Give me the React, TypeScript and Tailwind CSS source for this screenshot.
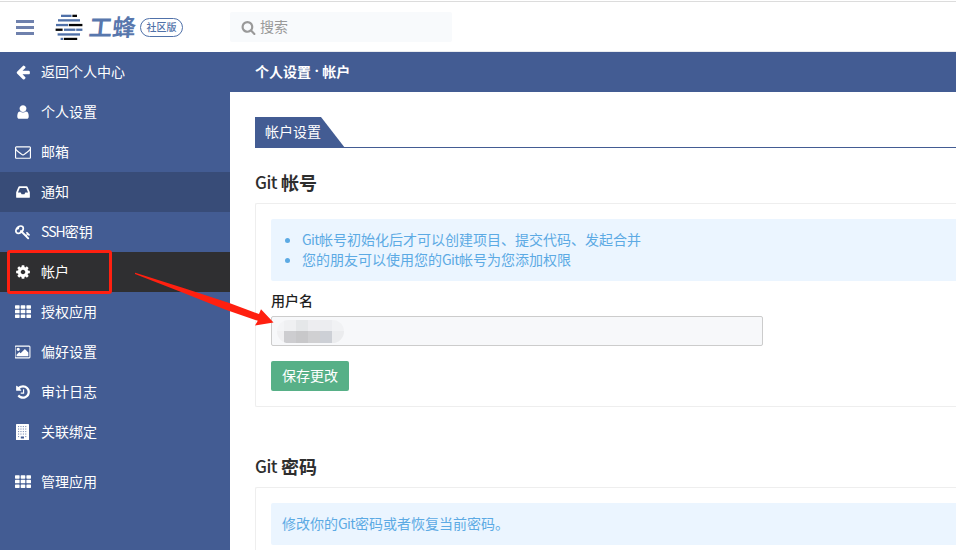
import React from "react";

type IconProps = { d: string; box?: string; className?: string };
const Icon = ({ d, box = "0 0 1792 1792", className = "h-4 w-4" }: IconProps) => (
  <svg viewBox={box} className={className} fill="currentColor" aria-hidden="true">
    <path d={d} />
  </svg>
);

const paths = {
  arrow:
    "M1664 896v128q0 53-32.5 90.5t-84.5 37.5h-704l293 294q38 36 38 90t-38 90l-75 76q-37 37-90 37-52 0-91-37l-651-652q-37-37-37-90 0-52 37-91l651-650q38-38 91-38 52 0 90 38l75 74q38 38 38 91t-38 91l-293 293h704q52 0 84.5 37.5t32.5 90.5z",
  user: "M1536 1399q0 109-62.5 187t-150.5 78h-854q-88 0-150.5-78t-62.5-187q0-85 8.5-160.5t31.5-152 58.5-131 94-89 134.5-34.5q131 128 313 128t313-128q76 0 134.5 34.5t94 89 58.5 131 31.5 152 8.5 160.5zm-256-887q0 159-112.5 271.5t-271.5 112.5-271.5-112.5-112.5-271.5 112.5-271.5 271.5-112.5 271.5 112.5 112.5 271.5z",
  mail: "M1664 1504v-768q-32 36-69 66-268 206-426 338-51 43-83 67t-86.5 48.5-102.5 24.5h-2q-48 0-102.5-24.5t-86.5-48.5-83-67q-158-132-426-338-37-30-69-66v768q0 13 9.5 22.5t22.5 9.5h1472q13 0 22.5-9.5t9.5-22.5zm0-1051v-24.5l-.5-13-3-12.5-5.5-9-9-7.5-14-2.5h-1472q-13 0-22.5 9.5t-9.5 22.5q0 168 147 284 193 152 401 317 6 5 35 29.5t46 37.5 44.5 31.5 50.5 27.5 43 9h2q20 0 43-9t50.5-27.5 44.5-31.5 46-37.5 35-29.5q208-165 401-317 54-43 100.5-115.5t46.5-131.5zm128-37v1088q0 66-47 113t-113 47h-1472q-66 0-113-47t-47-113v-1088q0-66 47-113t113-47h1472q66 0 113 47t47 113z",
  inbox:
    "M1151 960h316q-1-3-2.5-8t-2.5-8l-212-496h-708l-212 496q-1 2-2.5 8t-2.5 8h316l95 192h320zm513 30v482q0 26-19 45t-45 19h-1408q-26 0-45-19t-19-45v-482q0-62 25-123l238-552q10-25 36.5-42t52.5-17h832q26 0 52.5 17t36.5 42l238 552q25 61 25 123z",
  key: "M832 512q0-80-56-136t-136-56-136 56-56 136q0 42 19 83-41-19-83-19-80 0-136 56t-56 136 56 136 136 56 136-56 56-136q0-42-19-83 41 19 83 19 80 0 136-56t56-136zm851 704q0 17-49 66t-66 49q-9 0-28.5-16t-36.5-33-38.5-40-24.5-26l-96 96 220 220q28 28 28 68 0 42-39 81t-81 39q-40 0-68-28l-671-671q-176 131-365 131-163 0-265.5-102.5t-102.5-265.5q0-160 95-313t248-248 313-95q163 0 265.5 102.5t102.5 265.5q0 189-131 365l355 355 96-96q-3-3-26-24.5t-40-38.5-33-36.5-16-28.5q0-17 49-66t66-49q13 0 23 10 6 6 46 44.5t82 79.5 86.5 86 73 78 28.5 41z",
  cog: "M1152 896q0-106-75-181t-181-75-181 75-75 181 75 181 181 75 181-75 75-181zm512-109v222q0 12-8 23t-20 13l-185 28q-19 54-39 91 35 50 107 138 10 12 10 25t-9 23q-27 37-99 108t-94 71q-12 0-26-9l-138-108q-44 23-91 38-16 136-29 186-7 28-36 28h-222q-14 0-24.5-8.5t-11.5-21.5l-28-184q-49-16-90-37l-141 107q-10 9-25 9-14 0-25-11-126-114-165-168-7-10-7-23 0-12 8-23 15-21 51-66.5t54-70.5q-27-50-41-99l-183-27q-13-2-21-12.5t-8-23.5v-222q0-12 8-23t19-13l186-28q14-46 39-92-40-57-107-138-10-12-10-24 0-10 9-23 26-36 98.5-107.5t94.5-71.5q13 0 26 10l138 107q44-23 91-38 16-136 29-186 7-28 36-28h222q14 0 24.5 8.5t11.5 21.5l28 184q49 16 90 37l142-107q9-9 24-9 13 0 25 10 129 119 165 170 7 8 7 22 0 12-8 23-15 21-51 66.5t-54 70.5q26 50 41 98l183 28q13 2 21 12.5t8 23.5z",
  picture:
    "M576 576q0 80-56 136t-136 56-136-56-56-136 56-136 136-56 136 56 56 136zm1024 384v448h-1408v-192l320-320 160 160 512-512zm96-704h-1600q-13 0-22.5 9.5t-9.5 22.5v1216q0 13 9.5 22.5t22.5 9.5h1600q13 0 22.5-9.5t9.5-22.5v-1216q0-13-9.5-22.5t-22.5-9.5zm160 32v1216q0 66-47 113t-113 47h-1600q-66 0-113-47t-47-113v-1216q0-66 47-113t113-47h1600q66 0 113 47t47 113z",
  history:
    "M1664 896q0 156-61 298t-164 245-245 164-298 61q-172 0-327-72.5t-264-204.5q-7-10-6.5-22.5t8.5-20.5l137-138q10-9 25-9 16 2 23 12 73 95 179 147t225 52q104 0 198.5-40.5t163.5-109.5 109.5-163.5 40.5-198.5-40.5-198.5-109.5-163.5-163.5-109.5-198.5-40.5q-98 0-188 35.5t-160 101.5l137 138q31 30 14 69-17 40-59 40h-448q-26 0-45-19t-19-45v-448q0-42 40-59 39-17 69 14l130 129q107-101 244.5-156.5t284.5-55.5q156 0 298 61t245 164 164 245 61 298zm-640-288v448q0 14-9 23t-23 9h-320q-14 0-23-9t-9-23v-64q0-14 9-23t23-9h224v-352q0-14 9-23t23-9h64q14 0 23 9t9 23z",
  search:
    "M1216 832q0-185-131.5-316.5t-316.5-131.5-316.5 131.5-131.5 316.5 131.5 316.5 316.5 131.5 316.5-131.5 131.5-316.5zm512 832q0 52-38 90t-90 38q-54 0-90-38l-343-342q-179 124-399 124-143 0-273.5-55.5t-225-150-150-225-55.5-273.5 55.5-273.5 150-225 225-150 273.5-55.5 273.5 55.5 225 150 150 225 55.5 273.5q0 220-124 399l343 343q37 37 37 90z",
};

const GridIcon = () => (
  <svg viewBox="0 0 16 16" className="h-4 w-4" fill="currentColor" aria-hidden="true">
    {[1.2, 5.8, 10.4].map((y) =>
      [0, 5.7, 11.4].map((x) => <rect key={`${x}-${y}`} x={x} y={y} width="4.6" height="3.5" rx="0.6" />)
    )}
  </svg>
);

const BuildingIcon = () => (
  <svg viewBox="0 0 16 16" className="h-4 w-4" aria-hidden="true">
    <rect x="1" width="13" height="16" rx="0.6" fill="#fff" />
    {[2, 4.5, 7, 9.5].map((y) =>
      [3, 5.4, 7.8, 10.2].map((x) => <rect key={`${x}-${y}`} x={x} y={y} width="1.1" height="1.1" fill="#7d8fb6" />)
    )}
    <rect x="3" y="12" width="1.1" height="1.1" fill="#7d8fb6" />
    <rect x="10.2" y="12" width="1.1" height="1.1" fill="#7d8fb6" />
    <rect x="5.8" y="12.5" width="3.2" height="2" fill="#435c93" />
  </svg>
);

const nav: { label: React.ReactNode; icon: React.ReactNode; row?: string }[] = [
  { label: "返回个人中心", icon: <Icon d={paths.arrow} /> },
  { label: "个人设置", icon: <Icon d={paths.user} /> },
  { label: "邮箱", icon: <Icon d={paths.mail} /> },
  { label: "通知", icon: <Icon d={paths.inbox} />, row: "bg-[#384c78]" },
  { label: <><span className="tracking-[-1px]">SSH</span>密钥</>, icon: <Icon d={paths.key} /> },
  { label: "帐户", icon: <Icon d={paths.cog} />, row: "bg-[#2f2f31]" },
  { label: "授权应用", icon: <GridIcon /> },
  { label: "偏好设置", icon: <Icon d={paths.picture} box="0 0 1920 1792" /> },
  { label: "审计日志", icon: <Icon d={paths.history} /> },
  { label: "关联绑定", icon: <BuildingIcon /> },
  { label: "管理应用", icon: <GridIcon />, row: "mt-[10px]" },
];

const Logo = () => (
  <svg viewBox="0 0 28 28" className="ml-[21px] h-7 w-7 shrink-0" aria-hidden="true">
    <g fill="#4f70a8">
      <rect x="6" y="1.7" width="10.5" height="2.3" />
      <rect x="3" y="6.2" width="22" height="2.3" />
      <rect x="1" y="10.9" width="12" height="2.3" />
      <rect x="9" y="15.6" width="11.4" height="2.3" />
      <rect x="21.2" y="15.6" width="6.2" height="2.3" />
      <rect x="2.6" y="20.3" width="22.4" height="2.3" />
      <rect x="5.6" y="24.8" width="2.4" height="2.2" />
    </g>
    <g fill="#050505">
      <rect x="17.4" y="1.7" width="4.6" height="2.3" />
      <rect x="13.8" y="10.9" width="13.6" height="2.3" />
      <rect x="0.6" y="15.6" width="7" height="2.3" />
      <rect x="8.8" y="24.8" width="13.4" height="2.2" />
    </g>
  </svg>
);

const Header = () => (
  <>
    <header className="mt-px flex h-[50px] items-center border-t border-[#dcdcdc] bg-white pt-px pl-4">
      <div className="flex h-[15px] w-[18px] shrink-0 flex-col gap-[3px]">
        <span className="h-[3px] bg-[#6f81ad]" />
        <span className="h-[3px] bg-[#6f81ad]" />
        <span className="h-[3px] bg-[#6f81ad]" />
      </div>
      <Logo />
      <span className="ml-[6px] w-[47px] -skew-x-6 pb-[2px] text-[23.5px] leading-[30px] font-bold whitespace-nowrap text-[#5877ad]">工蜂</span>
      <span className="ml-[4px] flex h-[19px] w-[43px] shrink-0 items-center justify-center rounded-full border border-[#5071a9] pb-px text-[10px] font-medium text-[#5071a9]">社区版</span>
      <div className="ml-[47px] flex h-[30px] w-[222px] items-center rounded-[2px] bg-[#f8fafc] pl-[11px] text-[14px] text-[#999]">
        <Icon d={paths.search} className="mr-[4px] h-[15px] w-[15px]" />
        <span className="pb-[2px]">搜索</span>
      </div>
    </header>
    <div className="ml-[230px] h-px bg-[#e9ebef]" />
  </>
);

const Git = () => <span className="tracking-[-0.6px]">Git</span>;

const Heading = ({ children, className }: { children: React.ReactNode; className: string }) => (
  <h2 className={`flex text-[18px] leading-6 font-bold ${className}`}>
    <span className="w-[26px] text-[17px] font-medium tracking-[-0.5px] whitespace-pre">Git </span>
    {children}
  </h2>
);

export default function App() {
  return (
    <div className="relative flex h-[550px] w-[956px] flex-col overflow-hidden bg-white font-['Noto_Sans_CJK_SC','Noto_Sans',sans-serif] text-[14px] leading-5 text-[#2e2e2e]">
      <Header />
      <div className="flex h-[498px]">
        <aside className="w-[230px] shrink-0 bg-[#435c93] text-white">
          {nav.map((item, i) => (
            <div key={i} className={`flex h-10 items-center pl-[15px] ${item.row ?? ""}`}>
              {item.icon}
              <span className="ml-[10px] pb-[2px]">{item.label}</span>
            </div>
          ))}
        </aside>
        <main className="min-w-0 flex-1">
          <div className="flex h-10 items-center bg-[#435c93] pb-[2px] pl-[25px] font-bold text-white">
            个人设置<span className="font-['Noto_Sans'] whitespace-pre"> · </span>帐户
          </div>
          <div className="pt-[25px] pl-[25px]">
            <div className="flex h-[31px] border-b border-[#435c93]">
              <div className="h-[31px] w-[90px] bg-[#435c93] pt-[4px] pl-[10px] text-white [clip-path:polygon(0_0,66px_0,90px_100%,0_100%)]">帐户设置</div>
            </div>
            <Heading className="mt-[22px]">帐号</Heading>
            <section className="mt-[9px] h-[204px] rounded-l-[2px] border border-r-0 border-[#eee] pt-[15px] pl-[15px]">
              <ul className="h-[62px] list-disc rounded-l-[2px] bg-[#ebf5ff] pt-[10px] pl-[31px] text-[#5caae4]">
                <li><Git />帐号初始化后才可以创建项目、提交代码、发起合并</li>
                <li>您的朋友可以使用您的<Git />帐号为您添加权限</li>
              </ul>
              <div className="mt-[9px] font-medium text-[#1f1f1f]">用户名</div>
              <div className="mt-[6px] flex h-[30px] w-[492px] items-center rounded-[2px] border border-[#ccc] bg-[#f7f8fa] pl-[5px]">
                <div className="grid h-[23px] w-[67px] grid-cols-[7px_12px_12px_12px_12px_12px] grid-rows-[11px_12px] overflow-hidden rounded-full">
                  <i className="bg-[#f3f4f6]" />
                  <i className="bg-[#eff0f2]" />
                  <i className="bg-[#e5e7e9]" />
                  <i className="bg-[#ededf0]" />
                  <i className="bg-[#ecedf0]" />
                  <i className="bg-[#f1f2f4]" />
                  <i className="bg-[#f0f0f2]" />
                  <i className="bg-[#cdcdd0]" />
                  <i className="bg-[#c8c8ca]" />
                  <i className="bg-[#d0d0d2]" />
                  <i className="bg-[#cdd0d6]" />
                  <i className="bg-[#ebecee]" />
                </div>
              </div>
              <button className="mt-[15px] block h-[30px] w-[78px] rounded-[2px] bg-[#57b087] pb-[2px] text-white">保存更改</button>
            </section>
            <Heading className="mt-[47px]">密码</Heading>
            <section className="mt-[9px] h-[90px] rounded-tl-[2px] border border-r-0 border-[#eee] pt-[15px] pl-[15px]">
              <p className="h-[42px] rounded-l-[2px] bg-[#ebf5ff] pt-[10px] pl-[11px] text-[#5caae4]">修改你的<Git />密码或者恢复当前密码。</p>
            </section>
          </div>
        </main>
      </div>
      <svg className="pointer-events-none absolute inset-0 h-[550px] w-[956px]" viewBox="0 0 956 550" aria-hidden="true">
        <rect x="8.5" y="251.5" width="102" height="41" rx="1.5" fill="none" stroke="#ff2010" strokeWidth="3" />
        <path d="M135 272.8L136 273L185 288.5L230 303.2L259 314L261 309.3L273.5 322.5L255 325.5L257.8 320.8L225 309.5L185 293.5L135 274Z" fill="#ff2010" />
      </svg>
    </div>
  );
}
